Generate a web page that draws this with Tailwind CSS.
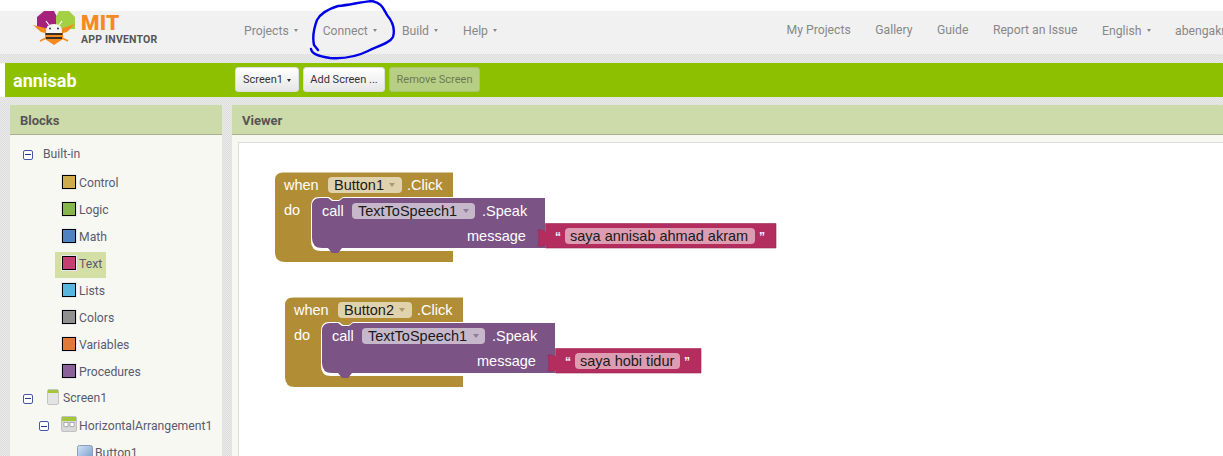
<!DOCTYPE html>
<html>
<head>
<meta charset="utf-8">
<script src="https://cdn.jsdelivr.net/npm/@tailwindcss/browser@4"></script>
</head>
<body class="bg-white">
<div class="relative w-[1223px] h-[456px] overflow-hidden bg-white font-['Roboto',sans-serif] text-[12.2px]">
  <div class="h-[11px] bg-white"></div>
  <header class="h-[43px] bg-[#f1f1f1] flex items-center text-[#888888]">
    <div class="w-[244px] h-full relative shrink-0">
      <svg class="absolute left-[30px] top-0" width="135" height="43" viewBox="30 11 135 43">
        <path d="M37 17 L44 11 H54 L57 17 V29 H37 Z" fill="#a6217c"/>
        <path d="M56 17 L59 11 H69 L75 17 V29 H56 Z" fill="#a4d044"/>
        <path d="M33 25 L45 28 H63 L75 24 L67 32 L63 33 V39 L54 45 L45 39 V33 L41 32 Z" fill="#f58a1f"/>
        <path d="M40 41 L46 38 M68 41 L62 38" stroke="#f58a1f" stroke-width="1.5"/>
        <path d="M46 33 Q45 24 54 24 Q63 24 62 33 Z" fill="#f6f6f6"/>
        <path d="M45.500 33 H62.500 V35 H45.500 Z M46 37 H62 V39 H46 Z" fill="#3a3024"/>
        <path d="M49 25 L46 21 M59 25 L62 21" stroke="#fff" stroke-width="1.2"/>
        <circle cx="50" cy="28.500" r="1" fill="#333"/><circle cx="58" cy="28.500" r="1" fill="#333"/>
        <text x="81" y="30" font-family="Roboto, sans-serif" font-weight="900" font-size="21" letter-spacing="0.3" fill="#f58a1f">MIT</text>
        <text x="81" y="43" font-family="Roboto, sans-serif" font-weight="700" font-size="10.500" letter-spacing="0.2" fill="#555555">APP INVENTOR</text>
      </svg>
    </div>
    <nav class="flex items-center gap-[25px] -mt-[3px]">
      <span class="flex items-center">Projects<span class="ml-[5px] w-0 h-0 border-x-[2.500px] border-x-transparent border-t-[3px] border-t-[#888888]"></span></span>
      <span class="flex items-center">Connect<span class="ml-[5px] w-0 h-0 border-x-[2.500px] border-x-transparent border-t-[3px] border-t-[#888888]"></span></span>
      <span class="flex items-center">Build<span class="ml-[5px] w-0 h-0 border-x-[2.500px] border-x-transparent border-t-[3px] border-t-[#888888]"></span></span>
      <span class="flex items-center">Help<span class="ml-[5px] w-0 h-0 border-x-[2.500px] border-x-transparent border-t-[3px] border-t-[#888888]"></span></span>
    </nav>
    <nav class="ml-auto flex items-center gap-[24.500px] -mt-[5px] whitespace-nowrap">
      <span>My Projects</span><span>Gallery</span><span>Guide</span><span>Report an Issue</span>
      <span class="flex items-center translate-y-[1px]">English<span class="ml-[5px] w-0 h-0 border-x-[2.500px] border-x-transparent border-t-[3px] border-t-[#888888]"></span></span>
      <span class="w-[48px] overflow-hidden translate-y-[1px]">abengakram</span>
    </nav>
  </header>
  <div class="h-[9px] bg-[#e4e4e4] bg-[conic-gradient(#dcdcdc_25%,#ececec_0_50%,#dcdcdc_0_75%,#ececec_0)] bg-[length:2px_2px]"></div>
  <div class="ml-[5px] h-[34px] bg-[#8dc100] flex items-center">
    <div class="w-[230px] pl-[8px] pt-[1px] text-white font-bold text-[18px]">annisab</div>
    <div class="flex gap-[4px] text-[11px] -mt-[1px]">
      <div class="h-[25px] w-[64px] flex items-center justify-center pt-[1px] rounded-[3px] border border-[#dddddd] bg-gradient-to-b from-white to-[#e6e6e6] text-[#333333]">Screen1<span class="ml-[4px] w-0 h-0 border-x-[2.500px] border-x-transparent border-t-[3px] border-t-[#333333]"></span></div>
      <div class="h-[25px] w-[82px] flex items-center justify-center pt-[1px] rounded-[3px] border border-[#dddddd] bg-gradient-to-b from-white to-[#e6e6e6] text-[#333333]">Add Screen ...</div>
      <div class="h-[25px] w-[91px] flex items-center justify-center pt-[1px] rounded-[3px] border border-[#a9c46c] bg-[#b7cf85] text-[#6b7a55]">Remove Screen</div>
    </div>
  </div>
  <div class="h-[359px] flex gap-[10px] pl-[10px] pt-[8px] bg-[#e4e4e4] bg-[conic-gradient(#dcdcdc_25%,#ececec_0_50%,#dcdcdc_0_75%,#ececec_0)] bg-[length:2px_2px]">
    <section class="w-[212px] shrink-0 bg-[#f8f8f3]">
      <div class="h-[30px] bg-[#cddaa9] border-b border-[#a9b08f] flex items-center pl-[10px] pt-[2px] font-bold text-[13px] text-[#555555]">Blocks</div>
      <ul class="text-[#5b5b6e] pt-[6px]">
        <li class="h-[27px] flex items-center pl-[13px]">
          <span class="w-[10px] h-[10px] rounded-[2px] border border-[#4a56a6] bg-white flex items-center justify-center"><span class="w-[6px] h-[1px] bg-[#2a3a90]"></span></span>
          <span class="ml-[10px]">Built-in</span>
        </li>
        <li class="h-[27px] flex items-center pl-[52px] mt-[1px] translate-y-[1px]"><span class="w-[14px] h-[14px] border border-black outline outline-[#e8e8f0] bg-[#cfac4b] -translate-y-[2px]"></span><span class="ml-[3px]">Control</span></li>
        <li class="h-[27px] flex items-center pl-[52px] translate-y-[1px]"><span class="w-[14px] h-[14px] border border-black outline outline-[#e8e8f0] bg-[#86b54d] -translate-y-[2px]"></span><span class="ml-[3px]">Logic</span></li>
        <li class="h-[27px] flex items-center pl-[52px] translate-y-[1px]"><span class="w-[14px] h-[14px] border border-black outline outline-[#e8e8f0] bg-[#4e82c0] -translate-y-[2px]"></span><span class="ml-[3px]">Math</span></li>
        <li class="h-[27px] flex items-center pl-[52px] translate-y-[1px]">
          <span class="flex items-center h-[26px] -ml-[7px] pl-[7px] w-[51px] bg-[#d3dfa5]"><span class="w-[14px] h-[14px] border border-black outline outline-[#e8e8f0] bg-[#c24170] -translate-y-[2px]"></span><span class="ml-[3px]">Text</span></span>
        </li>
        <li class="h-[27px] flex items-center pl-[52px] translate-y-[1px]"><span class="w-[14px] h-[14px] border border-black outline outline-[#e8e8f0] bg-[#58b5dd] -translate-y-[2px]"></span><span class="ml-[3px]">Lists</span></li>
        <li class="h-[27px] flex items-center pl-[52px] translate-y-[1px]"><span class="w-[14px] h-[14px] border border-black outline outline-[#e8e8f0] bg-[#909090] -translate-y-[2px]"></span><span class="ml-[3px]">Colors</span></li>
        <li class="h-[27px] flex items-center pl-[52px] translate-y-[1px]"><span class="w-[14px] h-[14px] border border-black outline outline-[#e8e8f0] bg-[#e07a3a] -translate-y-[2px]"></span><span class="ml-[3px]">Variables</span></li>
        <li class="h-[27px] flex items-center pl-[52px] translate-y-[1px]"><span class="w-[14px] h-[14px] border border-black outline outline-[#e8e8f0] bg-[#8a6199] -translate-y-[2px]"></span><span class="ml-[3px]">Procedures</span></li>
        <li class="h-[27px] flex items-center pl-[13px]">
          <span class="w-[10px] h-[10px] rounded-[2px] border border-[#4a56a6] bg-white flex items-center justify-center"><span class="w-[6px] h-[1px] bg-[#2a3a90]"></span></span>
          <svg class="ml-[14px] -mt-[4px]" width="12" height="16" viewBox="0 0 12 16"><rect x="0.5" y="0.5" width="11" height="15" rx="1.5" fill="#e4e4e4" stroke="#c4c4c4"/><rect x="1" y="1" width="10" height="3" fill="#a4c639"/></svg>
          <span class="ml-[4px]">Screen1</span>
        </li>
        <li class="h-[28px] flex items-center pl-[29px]">
          <span class="w-[10px] h-[10px] rounded-[2px] border border-[#4a56a6] bg-white flex items-center justify-center"><span class="w-[6px] h-[1px] bg-[#2a3a90]"></span></span>
          <svg class="ml-[12px] -mt-[4px]" width="16" height="16" viewBox="0 0 16 16"><rect x="0.5" y="0.5" width="15" height="15" rx="1.5" fill="#d8d8d8" stroke="#c0c0c0"/><rect x="1" y="1" width="14" height="4" fill="#a4c639"/><rect x="3" y="6.5" width="4" height="4" fill="#fff" stroke="#888" stroke-width="0.6"/><rect x="9" y="6.5" width="4" height="4" fill="#fff" stroke="#888" stroke-width="0.6"/></svg>
          <span class="ml-[2px] whitespace-nowrap">HorizontalArrangement1</span>
        </li>
        <li class="h-[27px] flex items-center pl-[67px]">
          <svg class="-mt-[2px]" width="16" height="16" viewBox="0 0 16 16"><defs><linearGradient id="b" x1="0" y1="0" x2="1" y2="1"><stop offset="0" stop-color="#d6e4f4"/><stop offset="1" stop-color="#6f97cf"/></linearGradient></defs><rect x="0.5" y="0.5" width="15" height="15" rx="2" fill="url(#b)" stroke="#8a9fba"/></svg>
          <span class="ml-[2px]">Button1</span>
        </li>
      </ul>
    </section>
    <section class="flex-1 bg-[#f8f8f3] min-w-0">
      <div class="h-[30px] bg-[#cddaa9] border-b border-[#a9b08f] flex items-center pl-[10px] pt-[2px] font-bold text-[13px] text-[#555555]">Viewer</div>
      <div class="ml-[6px] mt-[7px] h-[320px] bg-white border-t border-l border-[#dddddd] relative">
        <svg class="absolute -left-px -top-px" width="985" height="314" viewBox="238 142 985 314" font-family="'Liberation Sans', Arial, sans-serif" font-size="14.500">
          <g>
            <path d="M275 180 Q275 172.5 283 172.5 H453 V197 H343 l-4 3 h-6 l-4 -3 H319 Q311 197 311 206 V241 Q311 251 321 251 H453 V262 H285 Q275 262 275 252 Z" fill="#b18e35"/>
            <path d="M312 206 Q312 198 320 198 H328 l4 3 h7 l4 -3 H545 V248 H342 l-4 5 h-6 l-4 -5 H322 Q312 248 312 238 Z" fill="#7c5385"/>
            <path d="M545.5 223.500 H776 V248 H545.500 V245 Q541 247 538 246 Q540 238 538 230 Q541 229 545.500 232 Z" fill="#b32d5e" stroke="#a02552" stroke-width="0.6"/>
            <rect x="328" y="177" width="74" height="16" rx="4" fill="#e0d2ac"/>
            <rect x="352" y="203" width="123" height="16" rx="4" fill="#c6b8ca"/>
            <rect x="565" y="228" width="190" height="16" rx="4" fill="#dd9cb1"/>
            <path d="M389 183 h6 l-3 4 Z" fill="#a99a70"/>
            <path d="M463 209 h6 l-3 4 Z" fill="#8f7c98"/>
            <text x="284" y="190" fill="#fff">when</text>
            <text x="334" y="190" fill="#1a1a1a">Button1</text>
            <text x="407" y="190" fill="#fff">.Click</text>
            <text x="284" y="215" fill="#fff">do</text>
            <text x="322" y="216" fill="#fff">call</text>
            <text x="358" y="216" fill="#1a1a1a">TextToSpeech1</text>
            <text x="482" y="216" fill="#fff">.Speak</text>
            <text x="467" y="241" fill="#fff">message</text>
            <text x="555" y="241" fill="#fff" font-size="12" font-weight="700">“</text>
            <text x="570" y="241" fill="#1a1a1a">saya annisab ahmad akram</text>
            <text x="759" y="241" fill="#fff" font-size="12" font-weight="700">”</text>
          </g>
          <g transform="translate(10 125)">
            <path d="M275 180 Q275 172.5 283 172.5 H453 V197 H343 l-4 3 h-6 l-4 -3 H319 Q311 197 311 206 V241 Q311 251 321 251 H453 V262 H285 Q275 262 275 252 Z" fill="#b18e35"/>
            <path d="M312 206 Q312 198 320 198 H328 l4 3 h7 l4 -3 H545 V248 H342 l-4 5 h-6 l-4 -5 H322 Q312 248 312 238 Z" fill="#7c5385"/>
            <path d="M545.5 223.500 H691 V248 H545.500 V245 Q541 247 538 246 Q540 238 538 230 Q541 229 545.500 232 Z" fill="#b32d5e" stroke="#a02552" stroke-width="0.6"/>
            <rect x="328" y="177" width="74" height="16" rx="4" fill="#e0d2ac"/>
            <rect x="352" y="203" width="123" height="16" rx="4" fill="#c6b8ca"/>
            <rect x="565" y="228" width="105" height="16" rx="4" fill="#dd9cb1"/>
            <path d="M389 183 h6 l-3 4 Z" fill="#a99a70"/>
            <path d="M463 209 h6 l-3 4 Z" fill="#8f7c98"/>
            <text x="284" y="190" fill="#fff">when</text>
            <text x="334" y="190" fill="#1a1a1a">Button2</text>
            <text x="407" y="190" fill="#fff">.Click</text>
            <text x="284" y="215" fill="#fff">do</text>
            <text x="322" y="216" fill="#fff">call</text>
            <text x="358" y="216" fill="#1a1a1a">TextToSpeech1</text>
            <text x="482" y="216" fill="#fff">.Speak</text>
            <text x="467" y="241" fill="#fff">message</text>
            <text x="555" y="241" fill="#fff" font-size="12" font-weight="700">“</text>
            <text x="570" y="241" fill="#1a1a1a">saya hobi tidur</text>
            <text x="674" y="241" fill="#fff" font-size="12" font-weight="700">”</text>
          </g>
        </svg>
      </div>
    </section>
  </div>
  <svg class="absolute left-0 top-0 pointer-events-none" width="1223" height="456" viewBox="0 0 1223 456" fill="none">
    <path d="M311 49 C312 54 318 56 330 58 C345 59 358 56 368 51 C378 46 390 43 393 37 C395 30 393 22 387 15 C383 8 382 3 372 1 C360 2 350 5 338 6 C328 9 321 13 317 20 C314 28 312 36 314 45 L318 50" stroke="#0000e6" stroke-width="2.400" stroke-linecap="round"/>
  </svg>
</div>
</body>
</html>
